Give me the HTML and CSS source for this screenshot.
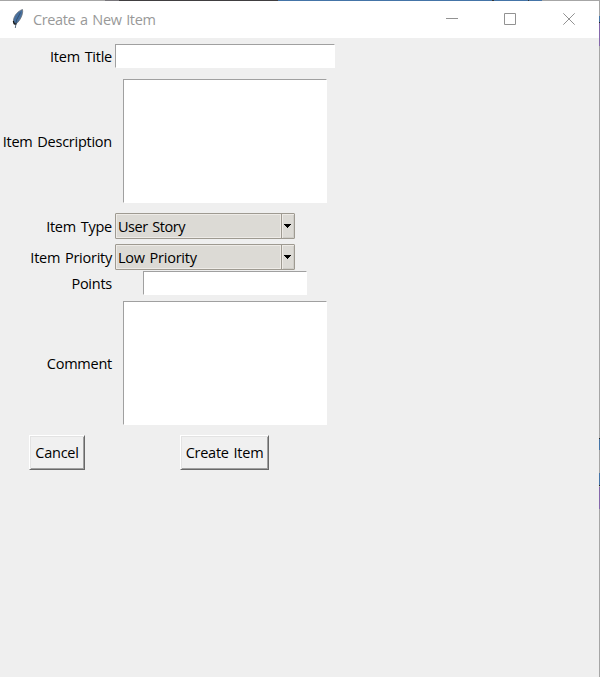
FILE: index.html
```
<!DOCTYPE html>
<html lang="en">
<head>
<meta charset="utf-8">
<title>Create a New Item</title>
<link rel="stylesheet" href="styles.css">
</head>
<body>
<main class="window">
  <header class="titlebar">
    <svg class="feather" width="12" height="20" viewBox="0 0 12 20"><path d="M10.500 .5C6 2 2 6.500 1.500 11L2 15L4 15C8 12 11.500 5 10.500 .5Z" fill="#4670a0" stroke="#6b7178" stroke-width=".8"/><path d="M8.500 3.500L4.500 11L3.300 19" fill="none" stroke="#34495f" stroke-width=".8"/><path d="M1.300 12L2.300 15H4.500" fill="none" stroke="#111" stroke-width="1.200"/></svg>
    <h1 class="caption">Create a New Item</h1>
    <div class="controls">
      <svg width="12" height="12" viewBox="0 0 12 12"><path d="M0 5.500H12"/></svg>
      <svg width="12" height="12" viewBox="0 0 12 12"><path d="M.5 .5H11.500V11.500H.5Z"/></svg>
      <svg class="close" width="12" height="12" viewBox="0 0 12 12"><path d="M.3 .3L11.700 11.700M11.700 .3L.3 11.700"/></svg>
    </div>
  </header>
  <form class="form">
    <label class="label">Item Title</label><div class="field entry"></div>
    <label class="label">Item Description</label><div class="field textarea"></div>
    <label class="label">Item Type</label>
    <div class="combo"><span class="value story">User Story</span><span class="drop"><svg width="7" height="4" viewBox="0 0 7 4" shape-rendering="crispEdges"><path d="M0 0H7V1H6V2H5V3H4V4H3V3H2V2H1V1H0Z"/></svg></span></div>
    <label class="label">Item Priority</label>
    <div class="combo"><span class="value">Low Priority</span><span class="drop"><svg width="7" height="4" viewBox="0 0 7 4" shape-rendering="crispEdges"><path d="M0 0H7V1H6V2H5V3H4V4H3V3H2V2H1V1H0Z"/></svg></span></div>
    <label class="label">Points</label><div class="field entry points"></div>
    <label class="label">Comment</label><div class="field textarea"></div>
    <button type="button" class="button cancel">Cancel</button>
    <button type="button" class="button create">Create Item</button>
  </form>
</main>
</body>
</html>
```
FILE: styles.css
```
* { box-sizing: border-box; }
body {
  margin: 0;
  height: 677px;
  overflow: hidden;
  padding: 1px 1px 0 0;
  font: 14.5px/20px "Open Sans", "Noto Sans", sans-serif;
  letter-spacing: -.25px;
  word-spacing: 1.3px;
  color: #000;
  background:
    linear-gradient(90deg, #a6a6a6 105px, #77757a 105px 119px, #403e40 119px 278px, #4474a7 278px 492px, #333 492px 494px, #4474a7 494px 528px, #333 528px 529px, #4474a7 529px 542px, #a6a6a6 542px) 0 0 / 600px 1px no-repeat,
    linear-gradient(#a6a6a6 16px, #4474a7 16px 22px, #222 22px 23px, #8568ab 23px 46px, #a6a6a6 46px 438px, #222 438px 439px, #4474a7 439px 450px, #a6a6a6 450px 473px, #4474a7 473px 485px, #222 485px 486px, #a6a6a6 486px 487px, #8568ab 487px 509px, #a6a6a6 509px) 599px 0 / 1px 677px no-repeat;
}
.window { height: 676px; background: #efefef; }
.titlebar {
  display: flex;
  align-items: center;
  height: 37px;
  padding: 0 24px 1px 12px;
  background: #fff;
}
.feather { margin-right: 9px; }
.caption {
  margin: 0;
  padding-top: 2px;
  font-size: 14.5px;
  font-weight: 400;
  color: #999;
  letter-spacing: -.38px;
}
.controls { display: flex; gap: 46px; margin-left: auto; }
.controls svg { fill: none; stroke: #929292; stroke-width: 1; }
.controls .close { margin-left: 1px; }
.form {
  display: grid;
  grid-template-columns: 114px 222px;
  grid-template-rows: 36px 134px 36px 26px 26px 134px 45px;
  align-items: center;
  justify-items: center;
}
.label { justify-self: end; padding: 2px 2px 0 0; white-space: nowrap; }
.field {
  background: #fff;
  border: 1px solid #fff;
  border-top-color: #a0a0a0;
  border-left-color: #a0a0a0;
}
.entry { width: 220px; height: 24px; }
.points { width: 164px; }
.textarea { width: 204px; height: 124px; }
.combo {
  justify-self: start;
  display: flex;
  width: 180px;
  height: 26px;
  margin-left: 1px;
  border: 1px solid #9e9a91;
  border-radius: 1px;
  background: #dcdad5;
}
.value {
  flex: 1;
  padding: 2px 0 0 1px;
  border: 1px solid #eeebe7;
}
.story { letter-spacing: -.45px; }
.drop {
  display: grid;
  place-items: center;
  width: 13px;
  padding-right: 1px;
  border-left: 1px solid #9e9a91;
  box-shadow: inset 1px 1px #eeebe7, inset -1px -1px #cfcdc8;
}
.button {
  height: 35px;
  padding: 0;
  color: #000;
  font: inherit;
  letter-spacing: inherit;
  word-spacing: inherit;
  background: #f0f0f0;
  border: 1px solid #696969;
  border-top-color: #fff;
  border-left-color: #fff;
  box-shadow: inset 1px 1px #e3e3e3, inset -1px -1px #a0a0a0;
}
.cancel { width: 56px; }
.create { width: 89px; margin-right: 1px; }
```
